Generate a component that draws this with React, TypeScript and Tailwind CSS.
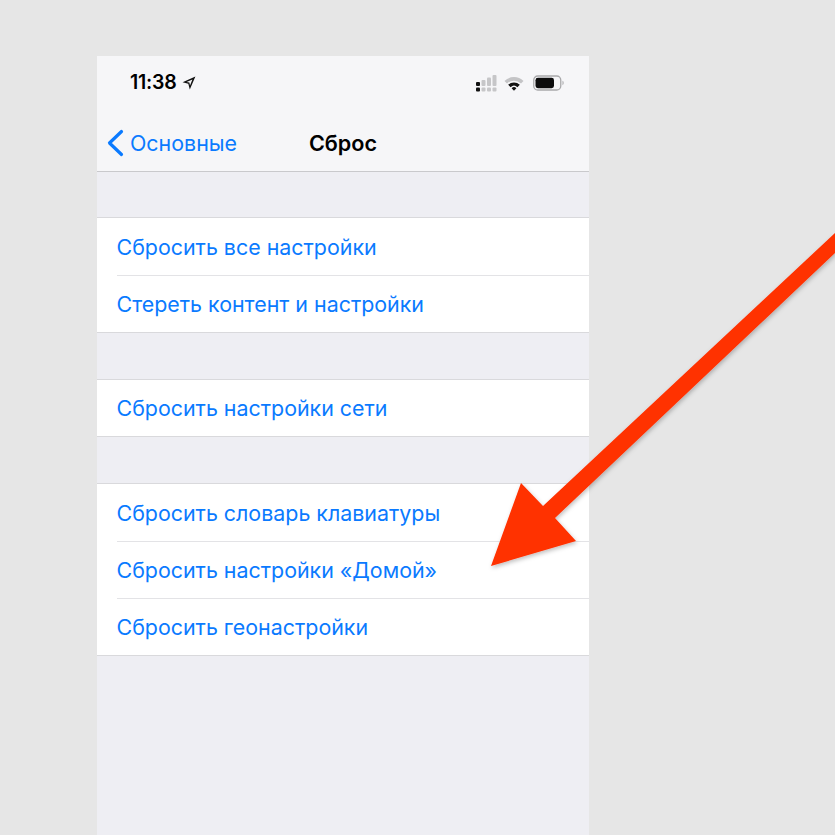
import React from 'react'

const groups = [
  ['Сбросить все настройки', 'Стереть контент и настройки'],
  ['Сбросить настройки сети'],
  ['Сбросить словарь клавиатуры', 'Сбросить настройки «Домой»', 'Сбросить геонастройки'],
]

const StatusIcons = () => (
  <div className="flex items-center">
    <svg width="21" height="17" viewBox="0 0 21 17">
      <rect x="0" y="7" width="4" height="4" rx="1" fill="#111" />
      <rect x="0" y="12.5" width="4" height="4" rx="1" fill="#111" />
      <rect x="5.5" y="5" width="4" height="6" rx="1" fill="#c6c6c8" />
      <rect x="5.5" y="12.5" width="4" height="4" rx="1" fill="#c6c6c8" />
      <rect x="11" y="2.5" width="4" height="8.5" rx="1" fill="#c6c6c8" />
      <rect x="11" y="12.5" width="4" height="4" rx="1" fill="#c6c6c8" />
      <rect x="16.5" y="0" width="4" height="11" rx="1" fill="#c6c6c8" />
      <rect x="16.5" y="12.5" width="4" height="4" rx="1" fill="#c6c6c8" />
    </svg>
    <svg className="ml-[7px]" width="20" height="15" viewBox="0 0 20 15">
      <path d="M0.5 5 A13.5 13.5 0 0 1 19.5 5 L17 7.6 A10 10 0 0 0 3 7.6 Z" fill="#c4c4c6" />
      <path d="M4.2 8.8 A8.3 8.3 0 0 1 15.8 8.8 L13.4 11.2 A5 5 0 0 0 6.6 11.2 Z" fill="#111" />
      <path d="M7.6 12.2 A3.4 3.4 0 0 1 12.4 12.2 L10 14.7 Z" fill="#111" />
    </svg>
    <svg className="ml-[9px]" width="32" height="16" viewBox="0 0 32 16">
      <rect x="0.75" y="1" width="27" height="14" rx="4" fill="none" stroke="#a9a9ab" strokeWidth="1.3" />
      <rect x="2.5" y="2.8" width="18.5" height="10.4" rx="2.4" fill="#0c0c0c" />
      <path d="M29.5 5.8 C31 6.2 31 9.8 29.5 10.2 Z" fill="#a9a9ab" />
    </svg>
  </div>
)

export default function App() {
  return (
    <div className="relative w-[835px] h-[835px] overflow-hidden bg-[#e6e6e6] pt-[56px] pl-[97px] font-['Inter','Liberation_Sans',sans-serif]">
      <div className="w-[492px] h-[779px] bg-[#eeeef3] flex flex-col">
        <div className="h-[116px] bg-[#f6f6f8] border-b border-[#c9c9cc] flex flex-col">
          <div className="h-[54px] flex items-center justify-between pl-[33px] pr-[24px]">
            <div className="flex items-center gap-[5px]">
              <span className="text-[19.5px] font-semibold text-black tracking-[-0.2px]">11:38</span>
              <svg width="14" height="14" viewBox="0 0 14 14">
                <path d="M13.4 0.6 L0.6 6.2 L6.3 7.7 L7.8 13.4 Z M10.4 3.4 L4.6 5.9 L7.4 6.6 L8 9.4 Z" fill="#111" fillRule="evenodd" />
              </svg>
            </div>
            <StatusIcons />
          </div>
          <div className="flex-1 grid grid-cols-[1fr_auto_1fr] items-center pl-[9px] pt-[6px]">
            <div className="flex items-center gap-[6px]">
              <svg width="18" height="28" viewBox="0 0 18 28">
                <path d="M15.5 2.5 L3.5 14 L15.5 25.5" fill="none" stroke="#0a7aff" strokeWidth="3.2" strokeLinecap="round" strokeLinejoin="round" />
              </svg>
              <span className="text-[21.4px] text-[#0a7aff]">Основные</span>
            </div>
            <span className="text-[21.6px] font-semibold text-black -ml-[9px]">Сброс</span>
            <div />
          </div>
        </div>
        <div className="flex flex-col gap-[46px] pt-[45px]">
          {groups.map((rows, i) => (
            <div key={i} className="bg-white border-y border-[#d9d9dc]">
              {rows.map((t, j) => (
                <div key={t} className="pl-[19.5px]">
                  <div className={`flex items-center pt-[1px] text-[21.4px] text-[#0a7aff] ${rows.length === 1 ? 'h-[56px]' : 'h-[57px]'} ${j > 0 ? 'border-t border-[#e3e3e6]' : ''}`}>
                    {t}
                  </div>
                </div>
              ))}
            </div>
          ))}
        </div>
      </div>
      <svg className="absolute left-0 top-0" width="835" height="835" viewBox="0 0 835 835">
        <defs>
          <filter id="sh" x="-10%" y="-10%" width="120%" height="120%">
            <feDropShadow dx="1" dy="2" stdDeviation="2" floodColor="#000" floodOpacity="0.25" />
          </filter>
        </defs>
        <polygon
          points="835,233 835,253 555,518 576,541 491,566 521,483 543,506"
          fill="#ff3000"
          filter="url(#sh)"
        />
      </svg>
    </div>
  )
}
